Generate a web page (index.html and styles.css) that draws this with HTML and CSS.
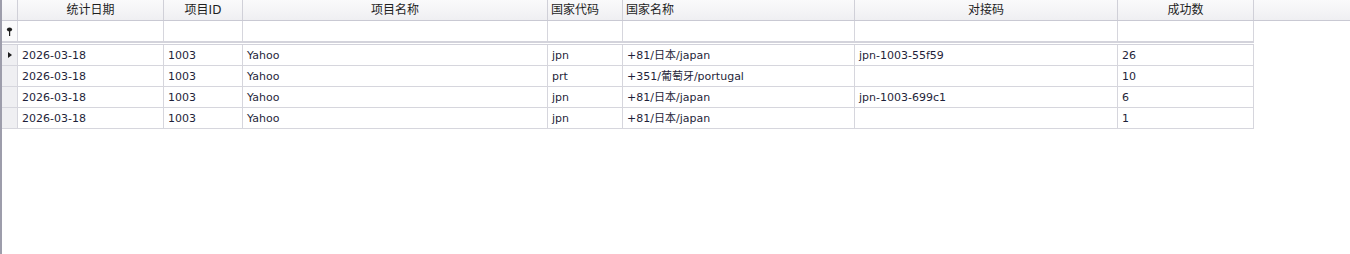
FILE: index.html
```html
<!DOCTYPE html>
<html>
<head>
<meta charset="utf-8">
<link rel="stylesheet" href="styles.css">
</head>
<body>
<div class="grid">
  <div class="row head">
    <div class="cell ind"></div>
    <div class="cell c1 center">统计日期</div>
    <div class="cell c2 center">项目ID</div>
    <div class="cell c3 center">项目名称</div>
    <div class="cell c4">国家代码</div>
    <div class="cell c5">国家名称</div>
    <div class="cell c6 center">对接码</div>
    <div class="cell c7 center">成功数</div>
    <div class="fill"></div>
  </div>
  <div class="body">
    <div class="row filter">
      <div class="cell ind">
        <svg width="7" height="9" viewBox="0 0 7 9"><ellipse cx="3.5" cy="2.5" rx="2.6" ry="2" fill="#1c1c1c"/><rect x="3" y="4" width="1.2" height="5" fill="#1c1c1c"/></svg>
      </div>
      <div class="cell c1"></div>
      <div class="cell c2"></div>
      <div class="cell c3"></div>
      <div class="cell c4"></div>
      <div class="cell c5"></div>
      <div class="cell c6"></div>
      <div class="cell c7"></div>
    </div>
    <div class="data">
      <div class="row">
        <div class="cell ind"><span class="arrow"></span></div>
        <div class="cell c1">2026-03-18</div>
        <div class="cell c2">1003</div>
        <div class="cell c3">Yahoo</div>
        <div class="cell c4">jpn</div>
        <div class="cell c5">+81/日本/japan</div>
        <div class="cell c6">jpn-1003-55f59</div>
        <div class="cell c7">26</div>
      </div>
      <div class="row">
        <div class="cell ind"></div>
        <div class="cell c1">2026-03-18</div>
        <div class="cell c2">1003</div>
        <div class="cell c3">Yahoo</div>
        <div class="cell c4">prt</div>
        <div class="cell c5">+351/葡萄牙/portugal</div>
        <div class="cell c6"></div>
        <div class="cell c7">10</div>
      </div>
      <div class="row">
        <div class="cell ind"></div>
        <div class="cell c1">2026-03-18</div>
        <div class="cell c2">1003</div>
        <div class="cell c3">Yahoo</div>
        <div class="cell c4">jpn</div>
        <div class="cell c5">+81/日本/japan</div>
        <div class="cell c6">jpn-1003-699c1</div>
        <div class="cell c7">6</div>
      </div>
      <div class="row">
        <div class="cell ind"></div>
        <div class="cell c1">2026-03-18</div>
        <div class="cell c2">1003</div>
        <div class="cell c3">Yahoo</div>
        <div class="cell c4">jpn</div>
        <div class="cell c5">+81/日本/japan</div>
        <div class="cell c6"></div>
        <div class="cell c7">1</div>
      </div>
    </div>
  </div>
</div>
</body>
</html>
```
FILE: styles.css
```css
html, body {
  margin: 0;
  padding: 0;
  background: #ffffff;
}
body {
  height: 254px;
  box-sizing: border-box;
  border-left: 2px solid #9d9dab;
  font-family: "DejaVu Sans", "Noto Sans CJK SC", sans-serif;
  font-size: 11px;
  color: #1f1f3a;
  overflow: hidden;
}
.grid {
  display: flex;
  flex-direction: column;
}
.row {
  display: flex;
  height: 20px;
}
.cell {
  box-sizing: content-box;
  height: 20px;
  border-right: 1px solid #d6d6dd;
  padding: 0 2px 0 4px;
  line-height: 20px;
  white-space: nowrap;
  overflow: hidden;
}
.ind { width: 15px; padding: 0; display: flex; align-items: center; justify-content: center; }
.c1 { width: 139px; }
.c2 { width: 72px; }
.c3 { width: 298px; }
.c4 { width: 68px; }
.c5 { width: 225px; }
.c6 { width: 256px; }
.c7 { width: 129px; }
.center { text-align: center; padding: 0 3px; }

.head {
  border-bottom: 1px solid #c9c9d3;
  background: linear-gradient(#fafafb, #efeff2);
  color: #1e1e1e;
  font-size: 12px;
}
.head .cell { border-right-color: #d0d0d8; padding-left: 3px; padding-right: 3px; }
.head .ind { padding: 0; }
.fill { flex: 1; }

.body {
  width: 1252px;
}
.filter {
  border-bottom: 2px solid #d3d3db;
}
.filter .ind { background: #fafafb; }
.data {
  margin-top: 1px;
  border-top: 1px solid #d3d3db;
}
.data .row {
  border-bottom: 1px solid #d6d6dd;
}
.data .cell {
  line-height: 22px;
}
.data .ind { background: #efeff2; }
.arrow {
  width: 0;
  height: 0;
  border-top: 3.5px solid transparent;
  border-bottom: 3.5px solid transparent;
  border-left: 4px solid #1c1c1c;
  margin-left: 1px;
}
```
